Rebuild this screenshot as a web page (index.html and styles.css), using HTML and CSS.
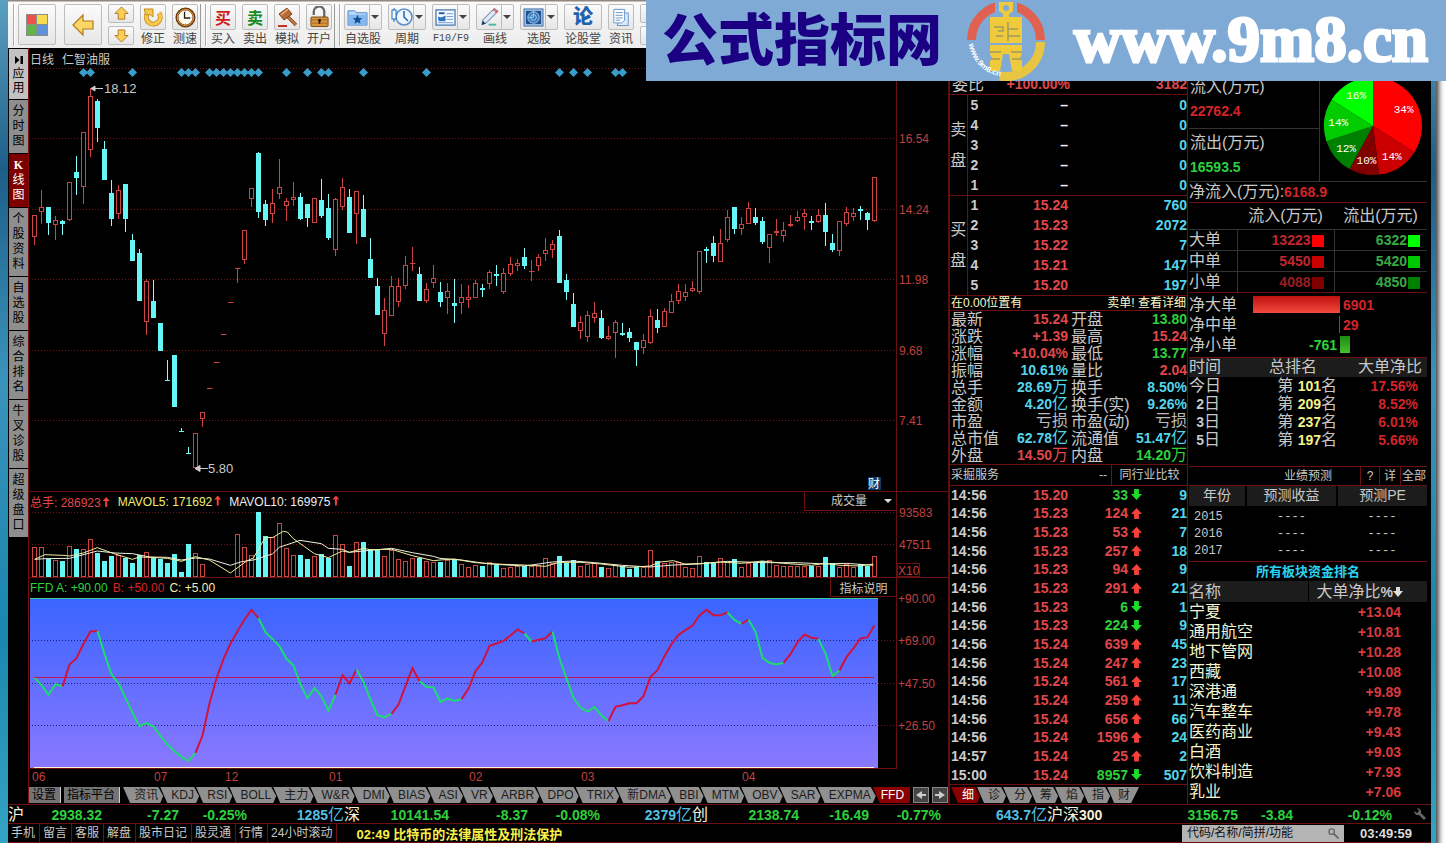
FILE: index.html
```html
<!DOCTYPE html>
<html lang="zh-CN">
<head>
<meta charset="utf-8">
<title>仁智油服 日线</title>
<link rel="stylesheet" href="styles.css">
</head>
<body>
<div class="window">
<header class="toolbar">
  <i class="grip"></i>
  <button class="tool big" aria-label="首页"><svg viewBox="0 0 22 22" width="22" height="22"><rect width="22" height="22" fill="#8a8f86"/><rect x="1" y="1" width="9" height="9" fill="#f0504a"/><rect x="11" y="1" width="10" height="9" fill="#f6dc50"/><rect x="1" y="11" width="9" height="10" fill="#5fb548"/><rect x="11" y="11" width="10" height="10" fill="#5f93d6"/></svg></button>
  <button class="tool big" aria-label="后退"><svg viewBox="0 0 24 24" width="24" height="24"><path d="M2 12 12 2v6h10v8H12v6z" fill="#fbd766" stroke="#b3791c" stroke-width="1.2"/></svg></button>
  <div class="stack">
    <button class="tool" aria-label="向上"><svg viewBox="0 0 16 16" width="15" height="15"><path d="M8 1 15 8h-3.500v6h-7V8H1z" fill="#fbcf55" stroke="#b3791c"/></svg></button>
    <button class="tool" aria-label="向下"><svg viewBox="0 0 16 16" width="15" height="15"><path d="M8 15 1 8h3.500V2h7v6H15z" fill="#fbcf55" stroke="#b3791c"/></svg></button>
  </div>
  <div class="item"><button class="tool" id="t1"><svg viewBox="0 0 22 22" width="22" height="22"><path d="M5 8a7 7 0 1 0 12-1" fill="none" stroke="#c68a1e" stroke-width="5"/><path d="M5 8a7 7 0 1 0 12-1" fill="none" stroke="#f9c94c" stroke-width="3.400"/><path d="M2 3h9v8L8 8.500 4 9z" fill="#f9c94c" stroke="#c68a1e"/></svg></button><label for="t1">修正</label></div>
  <div class="item"><button class="tool" id="t2"><svg viewBox="0 0 22 22" width="21" height="21"><circle cx="11" cy="11" r="9" fill="#fffdf0" stroke="#6d3a12" stroke-width="3"/><circle cx="11" cy="11" r="8.500" fill="none" stroke="#e7a537"/><path d="M10 5v6.500h6" fill="none" stroke="#222" stroke-width="1.400"/><path d="M11 3.500v1M11 17.500v1M3.500 11h1M17.500 11h1" stroke="#777"/></svg></button><label for="t2">测速</label></div>
  <i class="split"></i><i class="grip"></i>
  <div class="item"><button class="tool glyph buy" id="t3">买</button><label for="t3">买入</label></div>
  <div class="item"><button class="tool glyph sell" id="t4">卖</button><label for="t4">卖出</label></div>
  <div class="item"><button class="tool" id="t5"><svg viewBox="0 0 22 22" width="22" height="22"><path d="M10 9 20 19" stroke="#8d4a22" stroke-width="3.200"/><path d="M10 9 20 19" stroke="#c9824c" stroke-width="1.400"/><path d="m3 8 8-6 5 6-8 6z" fill="#b86a38" stroke="#7d421d"/><path d="m5 9 7-6" stroke="#edb284" stroke-width="1.500"/><path d="M2 20h9" stroke="#c63222" stroke-width="2"/></svg></button><label for="t5">模拟</label></div>
  <div class="item"><button class="tool" id="t6"><svg viewBox="0 0 22 22" width="21" height="22"><path d="M5 9V6a5 5 0 0 1 11-1v6" fill="none" stroke="#666" stroke-width="2.400"/><rect x="2" y="11" width="18" height="10" rx="1" fill="#d9943f" stroke="#7b4b12"/><path d="M2.500 14h17M2.500 17.500h17" stroke="#a96a22"/><path d="M11 13v5M9.500 14.500h3" stroke="#2c1a05" stroke-width="1.800"/></svg></button><label for="t6">开户</label></div>
  <i class="split"></i><i class="grip"></i>
  <div class="item"><button class="tool drop" id="t7"><svg viewBox="0 0 22 20" width="21" height="19"><path d="M1 3h7l2 2h11v13H1z" fill="#b9daf8" stroke="#4b86c4"/><rect x="2" y="7" width="18" height="11" fill="#82b9ef"/><path d="m11 7 1.500 3.500 3.500.3-2.700 2.300 1 3.600-3.300-2-3.300 2 1-3.600L6 10.800l3.500-.3z" fill="#164e96"/></svg></button><label for="t7">自选股</label></div>
  <div class="item"><button class="tool drop" id="t8"><svg viewBox="0 0 22 20" width="22" height="20"><circle cx="13" cy="10" r="8" fill="#eef6ff" stroke="#5c8fc4" stroke-width="1.600"/><path d="M13 4v6l4 4" fill="none" stroke="#2566a8" stroke-width="1.500"/><path d="M3 1v14" stroke="#1a6fc1"/><rect x="1" y="3" width="4" height="9" fill="#fff" stroke="#1a6fc1"/></svg></button><label for="t8">周期</label></div>
  <div class="item"><button class="tool drop" id="t9"><svg viewBox="0 0 22 20" width="21" height="19"><rect x="1" y="2" width="20" height="16" fill="#f6faff" stroke="#4d7fb5" stroke-width="1.400"/><path d="M12 6h7M12 9h7M3 12h2M12 12h7M3 15.500h16" stroke="#6e9bd0"/><rect x="4" y="4.500" width="6" height="2" fill="#1e58a4"/><path d="M3 9l3 1 3-1 2-1v6H4z" fill="#2e73c2"/></svg></button><label for="t9" class="mono">F10/F9</label></div>
  <div class="item"><button class="tool drop" id="t10"><svg viewBox="0 0 22 20" width="21" height="20"><path d="M10 18h8" stroke="#48b8a4" stroke-width="2"/><path d="M3 18 4 13 16 1l4 3L8 16z" fill="#cfe1f3" stroke="#567796"/><path d="m15 2 4 3" stroke="#e65555" stroke-width="2.500"/><path d="m6 14 11-11" stroke="#fff"/><path d="m3 18 1-4 3 3z" fill="#17395e"/></svg></button><label for="t10">画线</label></div>
  <div class="item"><button class="tool drop" id="t11"><svg viewBox="0 0 22 20" width="21" height="19"><rect x="1" y="1" width="20" height="18" fill="#a9c7e8" stroke="#3c6ba5"/><rect x="3" y="3" width="16" height="14" fill="#1e4f8e"/><circle cx="11" cy="10" r="6" fill="#3b78bd" stroke="#a9d2f4"/><circle cx="11" cy="10" r="3" fill="none" stroke="#a9d2f4"/><path d="M11 10V3M11 10H5" stroke="#7bd0ee"/></svg></button><label for="t11">选股</label></div>
  <div class="item"><button class="tool wide forum" id="t12">论</button><label for="t12">论股堂</label></div>
  <div class="item"><button class="tool" id="t13"><svg viewBox="0 0 20 20" width="18" height="19"><rect x="6" y="5" width="12" height="14" fill="#dcebfa" stroke="#5d8fc6"/><path d="M2 1h12v12l-3 3H2z" fill="#fff" stroke="#5d8fc6"/><path d="M4 4.500h8M4 7.500h8M4 10.500h8M4 13h5" stroke="#5d8fc6"/></svg></button><label for="t13">资讯</label></div>
  <div class="stack"><button class="tool" aria-label="更多"></button><button class="tool" aria-label="更多选项"></button></div>
</header>

<main class="main">
<nav class="side">
  <button class="light"><svg viewBox="0 0 8 8" width="8" height="8"><path d="M0 0l4.500 4L0 8zM5.500 0H8v8H5.500z" fill="#000"/></svg>应用</button>
  <button>分时图</button>
  <button class="on"><b>K</b>线图</button>
  <button>个股资料</button>
  <button>自选股</button>
  <button>综合排名</button>
  <button>牛叉诊股</button>
  <button>超级盘口</button>
</nav>

<section class="charts">
  <div class="strip"><div class="strip-in"><span>日线</span><span>仁智油服</span></div></div>
  <svg class="plot" id="price" viewBox="29 68 919 423"></svg>
  <div class="strip topline">
    <div class="strip-in">
      <span class="red">总手: 286923<s class="up"></s></span><span class="yellow">MAVOL5: 171692<s class="up"></s></span><span class="white">MAVOL10: 169975<s class="up"></s></span>
      <select class="pick" aria-label="副图指标"><option>成交量</option></select>
    </div>
  </div>
  <svg class="plot" id="volume" viewBox="29 511 919 66"></svg>
  <div class="strip topline">
    <div class="strip-in ffd"><span class="green">FFD A: +90.00</span><span class="dred">B: +50.00</span><span class="cream">C: +5.00</span><button class="explain">指标说明</button></div>
  </div>
  <svg class="plot" id="ffd" viewBox="29 597 919 188"></svg>
  <div class="tabs">
    <button class="sq">设置</button><button class="sq">指标平台</button>
    <div class="slants">
    <button>资讯</button><button>KDJ</button><button>RSI</button><button>BOLL</button><button>主力</button><button>W&amp;R</button><button>DMI</button><button>BIAS</button><button>ASI</button><button>VR</button><button>ARBR</button><button>DPO</button><button>TRIX</button><button>新DMA</button><button>BBI</button><button>MTM</button><button>OBV</button><button>SAR</button><button>EXPMA</button><button class="on end">FFD</button>
    </div>
    <button class="arrow" aria-label="左移"><svg viewBox="0 0 10 8" width="10" height="8"><path d="M0 4 6 0v3h4v2H6v3z" fill="#ccc"/></svg></button><button class="arrow" aria-label="右移"><svg viewBox="0 0 10 8" width="10" height="8"><path d="M10 4 4 0v3H0v2h4v3z" fill="#ccc"/></svg></button>
  </div>
</section>

<section class="quote">
  <div class="ratio"><span>委比</span><b class="red">+100.00%</b><b class="red">3182</b></div>
  <table class="book">
    <colgroup><col class="c-side"><col class="c-lvl"><col class="c-price"><col></colgroup>
    <tbody>
    <tr><th rowspan="5">卖<br>盘</th><td class="lvl">5</td><td class="white">–</td><td class="cyan">0</td></tr>
    <tr><td class="lvl">4</td><td class="white">–</td><td class="cyan">0</td></tr>
    <tr><td class="lvl">3</td><td class="white">–</td><td class="cyan">0</td></tr>
    <tr><td class="lvl">2</td><td class="white">–</td><td class="cyan">0</td></tr>
    <tr><td class="lvl">1</td><td class="white">–</td><td class="cyan">0</td></tr>
    </tbody><tbody>
    <tr><th rowspan="5">买<br>盘</th><td class="lvl">1</td><td>15.24</td><td class="cyan">760</td></tr>
    <tr><td class="lvl">2</td><td>15.23</td><td class="cyan">2072</td></tr>
    <tr><td class="lvl">3</td><td>15.22</td><td class="cyan">7</td></tr>
    <tr><td class="lvl">4</td><td>15.21</td><td class="cyan">147</td></tr>
    <tr><td class="lvl">5</td><td>15.20</td><td class="cyan">197</td></tr>
    </tbody>
  </table>
  <div class="notice"><span>在0.00位置有</span><a href="#">卖单! 查看详细</a></div>
  <table class="detail">
    <colgroup><col class="d1"><col class="d2"><col class="d3"><col></colgroup>
    <tr><th>最新</th><td>15.24</td><th>开盘</th><td class="green">13.80</td></tr>
    <tr><th>涨跌</th><td>+1.39</td><th>最高</th><td>15.24</td></tr>
    <tr><th>涨幅</th><td>+10.04%</td><th>最低</th><td class="green">13.77</td></tr>
    <tr><th>振幅</th><td class="cyan">10.61%</td><th>量比</th><td>2.04</td></tr>
    <tr><th>总手</th><td class="cyan">28.69<i>万</i></td><th>换手</th><td class="cyan">8.50%</td></tr>
    <tr><th>金额</th><td class="cyan">4.20<i>亿</i></td><th>换手(实)</th><td class="cyan">9.26%</td></tr>
    <tr><th>市盈</th><td class="grey"><i>亏损</i></td><th>市盈(动)</th><td class="grey"><i>亏损</i></td></tr>
    <tr><th>总市值</th><td class="cyan">62.78<i>亿</i></td><th>流通值</th><td class="cyan">51.47<i>亿</i></td></tr>
    <tr><th>外盘</th><td>14.50<i>万</i></td><th>内盘</th><td class="green">14.20<i>万</i></td></tr>
  </table>
  <div class="sector"><span>采掘服务</span><span>--</span><a href="#">同行业比较</a></div>
  <div class="ticks"><table>
    <colgroup><col class="k1"><col class="k2"><col class="k3"><col class="k4"><col></colgroup>
    <tr><th>14:56</th><td>15.20</td><td class="green">33</td><td class="dn"></td><td class="cyan">9</td></tr>
    <tr><th>14:56</th><td>15.23</td><td>124</td><td class="ar"></td><td class="cyan">21</td></tr>
    <tr><th>14:56</th><td>15.23</td><td>53</td><td class="ar"></td><td class="cyan">7</td></tr>
    <tr><th>14:56</th><td>15.23</td><td>257</td><td class="ar"></td><td class="cyan">18</td></tr>
    <tr><th>14:56</th><td>15.23</td><td>94</td><td class="ar"></td><td class="cyan">9</td></tr>
    <tr><th>14:56</th><td>15.23</td><td>291</td><td class="ar"></td><td class="cyan">21</td></tr>
    <tr><th>14:56</th><td>15.23</td><td class="green">6</td><td class="dn"></td><td class="cyan">1</td></tr>
    <tr><th>14:56</th><td>15.23</td><td class="green">224</td><td class="dn"></td><td class="cyan">9</td></tr>
    <tr><th>14:56</th><td>15.24</td><td>639</td><td class="ar"></td><td class="cyan">45</td></tr>
    <tr><th>14:56</th><td>15.24</td><td>247</td><td class="ar"></td><td class="cyan">23</td></tr>
    <tr><th>14:56</th><td>15.24</td><td>561</td><td class="ar"></td><td class="cyan">17</td></tr>
    <tr><th>14:56</th><td>15.24</td><td>259</td><td class="ar"></td><td class="cyan">11</td></tr>
    <tr><th>14:56</th><td>15.24</td><td>656</td><td class="ar"></td><td class="cyan">66</td></tr>
    <tr><th>14:56</th><td>15.24</td><td>1596</td><td class="ar"></td><td class="cyan">24</td></tr>
    <tr><th>14:57</th><td>15.24</td><td>25</td><td class="ar"></td><td class="cyan">2</td></tr>
    <tr><th>15:00</th><td>15.24</td><td class="green">8957</td><td class="dn"></td><td class="cyan">507</td></tr>
  </table></div>
  <div class="tabs quote-tabs"><div class="slants"><button class="on">细</button><button>诊</button><button>分</button><button>筹</button><button>焰</button><button>指</button><button class="last">财</button></div></div>
</section>

<section class="flow">
  <div class="inout">
    <div class="io">
      <div class="io-box"><span>流入(万元)</span><b class="dred">22762.4</b></div>
      <div class="io-box"><span>流出(万元)</span><b class="green">16593.5</b></div>
    </div>
    <svg id="pie" viewBox="0 0 107 106" width="107" height="106"></svg>
  </div>
  <div class="net">净流入(万元):<b class="dred">6168.9</b></div>
  <table class="sizes">
    <colgroup><col class="s1"><col class="s2"><col></colgroup>
    <tr><th></th><th class="h">流入(万元)</th><th class="h">流出(万元)</th></tr>
    <tr><th>大单</th><td>13223<s class="b1"></s></td><td class="green">6322<s class="b4"></s></td></tr>
    <tr><th>中单</th><td>5450<s class="b2"></s></td><td class="green">5420<s class="b5"></s></td></tr>
    <tr><th>小单</th><td class="dim">4088<s class="b3"></s></td><td class="green">4850<s class="b6"></s></td></tr>
  </table>
  <div class="bars">
    <div><span>净大单</span><p><s class="big-in"></s></p><b class="dred">6901</b></div>
    <div><span>净中单</span><p><s class="mid-in"></s></p><b class="dred">29</b></div>
    <div><span>净小单</span><p class="green">-761</p><s class="small-out"></s></div>
  </div>
  <table class="rank">
    <colgroup><col class="r1"><col class="r2"><col></colgroup>
    <tr class="head"><th>时间</th><td>总排名</td><td>大单净比</td></tr>
    <tr><th>今日</th><td>第 <b>101</b>名</td><td class="v">17.56%</td></tr>
    <tr><th><b>2</b>日</th><td>第 <b>209</b>名</td><td class="v">8.52%</td></tr>
    <tr><th><b>3</b>日</th><td>第 <b>237</b>名</td><td class="v">6.01%</td></tr>
    <tr><th><b>5</b>日</th><td>第 <b>197</b>名</td><td class="v">5.66%</td></tr>
  </table>
  <div class="fc-title"><span>业绩预测</span><button>?</button><button>详</button><button>全部</button></div>
  <table class="forecast">
    <colgroup><col class="f1"><col class="f2"><col></colgroup>
    <tr class="head"><th>年份</th><th>预测收益</th><th>预测PE</th></tr>
    <tr><th>2015</th><td>----</td><td>----</td></tr>
    <tr><th>2016</th><td>----</td><td>----</td></tr>
    <tr><th>2017</th><td>----</td><td>----</td></tr>
  </table>
  <h2>所有板块资金排名</h2>
  <table class="sectors">
    <tr class="head"><th>名称</th><td>大单净比<b>%</b><svg viewBox="0 0 10 10" width="10" height="10"><path d="M3 0h4v4h3L5 10 0 4h3z" fill="#ddd"/></svg></td></tr>
    <tr><th>宁夏</th><td>+13.04</td></tr>
    <tr><th>通用航空</th><td>+10.81</td></tr>
    <tr><th>地下管网</th><td>+10.28</td></tr>
    <tr><th>西藏</th><td>+10.08</td></tr>
    <tr><th>深港通</th><td>+9.89</td></tr>
    <tr><th>汽车整车</th><td>+9.78</td></tr>
    <tr><th>医药商业</th><td>+9.43</td></tr>
    <tr><th>白酒</th><td>+9.03</td></tr>
    <tr><th>饮料制造</th><td>+7.93</td></tr>
    <tr><th>乳业</th><td>+7.06</td></tr>
  </table>
</section>
</main>

<div class="indices">
  <div class="idx i1"><span>沪</span><b>2938.32</b><b>-7.27</b><b>-0.25%</b><b class="cyan">1285<i>亿</i></b></div>
  <div class="idx i2"><span>深</span><b>10141.54</b><b>-8.37</b><b>-0.08%</b><b class="cyan">2379<i>亿</i></b></div>
  <div class="idx i3"><span>创</span><b>2138.74</b><b>-16.49</b><b>-0.77%</b><b class="cyan">643.7<i>亿</i></b></div>
  <div class="idx i4"><span>沪深<em>300</em></span><b>3156.75</b><b>-3.84</b><b>-0.12%</b><svg viewBox="0 0 14 14" width="14" height="14"><path d="M1 4a4 4 0 0 0 5 4l5 5 2-2-5-5a4 4 0 0 0-4-5l2 3-2 2z" fill="#666"/></svg></div>
</div>
<footer class="status">
  <nav><a href="#">手机</a><a href="#">留言</a><a href="#">客服</a><a href="#">解盘</a><a href="#">股市日记</a><a href="#">股灵通</a><a href="#">行情</a><a href="#">24小时滚动</a></nav>
  <a class="news" href="#">02:49 比特币的法律属性及刑法保护</a>
  <div class="search"><input type="text" aria-label="搜索" placeholder="代码/名称/简拼/功能"><svg viewBox="0 0 12 12" width="11" height="11"><circle cx="4" cy="4" r="3" fill="none" stroke="#666" stroke-width="1.400"/><path d="m6.500 6.500 5 5" stroke="#666" stroke-width="2"/></svg></div>
  <time>03:49:59</time>
</footer>
</div>

<aside class="banner">
  <span class="brand">公式指标网</span>
  <svg class="logo" viewBox="0 0 80 80" width="80" height="80">
    <defs><path id="arc" d="M3 43A37 37 0 0 0 33 75"/></defs>
    <path d="M5.500 39a34.500 34.500 0 0 1 69 0" fill="none" stroke="#e0614f" stroke-width="9"/>
    <path d="M74.500 41A34.500 34.500 0 0 1 34 75" fill="none" stroke="#e8c443" stroke-width="9"/>
    <path d="M29 0h22v16h-7v42h-8V16h-7z" fill="#7faad6"/>
    <path d="M33 1h14v9l-4 3v3h13v26H24V16h13v-3l-4-3z" fill="#efcb3c"/>
    <circle cx="40" cy="7" r="3" fill="#7faad6"/>
    <path d="M28 26h9v4h-5M42 21v19M42 28h10M30 35h7M42 35h12" fill="none" stroke="#a39a5c" stroke-width="1.500"/>
    <path d="M24 44h32v9l-2 4 2 3v10H46l-3-17h-6l-3 17H24V60l2-3-2-4z" fill="#efcb3c"/>
    <path d="M24 51h11M45 51h11M25 58h9M46 58h9" stroke="#a39a5c" stroke-width="1.500"/>
    <text class="ring"><textPath href="#arc">www.9m8.cn</textPath></text>
  </svg>
  <span class="site">www.9m8.cn</span>
</aside>
<script src="script.js"></script>
</body>
</html>
```

FILE: styles.css
```css
* { box-sizing: border-box; }
body {
  margin: 0;
  background: #fff;
  color: #c8c8c8;
  font-family: "Liberation Sans", "Noto Sans CJK SC", sans-serif;
  font-size: 12px;
}
button, input, select {
  font: inherit;
  color: inherit;
  margin: 0;
  padding: 0;
  border: 0;
  background: none;
  border-radius: 0;
}
a { color: inherit; text-decoration: none; }
i, em { font-style: normal; }
s { text-decoration: none; display: inline-block; }
table { border-collapse: collapse; border-spacing: 0; width: 100%; table-layout: fixed; }
th, td { padding: 0; font-weight: 400; }

.red { color: #e0474b; }
.dred { color: #d3242a; }
.green { color: #2fd03c; }
.cyan { color: #55d5ea; }
.yellow { color: #f0ee70; }
.cream { color: #f5efb0; }
.white { color: #eee; }
.grey { color: #bbb; }

.window {
  margin-right: 10px;
  padding: 0 5px 0 8px;
  background: linear-gradient(#5aa0c0, #1d5e88 20%, #3a93bb 45%, #1a86ae 75%, #35a3c4);
  box-shadow: 3px 4px 5px #444;
}

/* toolbar */
.toolbar {
  display: flex;
  gap: 6px;
  height: 48px;
  padding: 4px 6px 0 5px;
  overflow: hidden;
  background: linear-gradient(#8f8680 1px, #fafafa 2px, #ececec);
  color: #444;
}
.grip { flex: none; width: 2px; margin-right: -3px; height: 42px; border-left: 1px solid #aaa; background: #fff; }
.split { flex: none; width: 1px; margin: 0 -2px 0 -4px; height: 44px; background: #999; }
.tool {
  display: flex;
  align-items: center;
  justify-content: center;
  width: 26px;
  height: 26px;
  background: linear-gradient(#fbfbfb, #e6e6e6);
  border: 1px solid #bdbdbd;
  border-radius: 2px;
}
.big { flex: none; width: 38px; height: 41px; }
.big + .big { margin-left: 2px; }
.stack { flex: none; display: grid; gap: 3px; align-content: start; }
.stack .tool { height: 19px; }
.item { flex: none; display: flex; flex-direction: column; align-items: center; }
.item label { width: 26px; display: flex; justify-content: center; white-space: nowrap; line-height: 18px; }
.drop, .wide { width: 38px; }
.drop { justify-content: flex-start; padding-left: 2px; position: relative; }
.drop::before { content: ""; position: absolute; right: 11px; top: 0; bottom: 0; width: 1px; background: #bdbdbd; }
.drop::after {
  content: "";
  position: absolute;
  right: 2px;
  top: 10px;
  border: 4px solid transparent;
  border-top-color: #444;
  border-bottom: 0;
}
.glyph { font-weight: 700; font-size: 16px; }
.buy { color: #d01c1c; }
.sell { color: #158a1f; }
.forum { color: #1f5fae; font-weight: 900; font-size: 20px; line-height: 20px; }
.mono { font-family: "Liberation Mono", monospace; font-size: 10px; }

/* main columns */
.main {
  display: grid;
  grid-template-columns: 21px minmax(0, 920fr) minmax(0, 239fr) minmax(0, 243fr);
  background: #000;
}
.side { display: flex; flex-direction: column; border-right: 1px solid #7a0c0c; padding-top: 1px; }
.side button {
  width: 19px;
  margin-left: 1px;
  padding: 4px 3px;
  border-bottom: 1px solid #000;
  background: #8e8e8e;
  color: #000;
  line-height: 15px;
  word-break: break-all;
}
.side .light { background: #c2c2c2; line-height: 14px; }
.side .light svg { display: block; margin: 3px auto; }
.side .on { background: #7c0000; color: #fff; }
.side b { display: block; font-family: "Liberation Serif", serif; }

/* charts */
.charts { display: flex; flex-direction: column; border-right: 1px solid #5a0c0c; }
.strip { display: grid; grid-template-columns: 868fr 51fr; height: 20px; }
.topline { border-top: 1px solid #6b1010; }
.strip-in {
  position: relative;
  display: flex;
  align-items: center;
  gap: 8px;
  border-right: 1px solid #6b1010;
  padding-left: 1px;
  white-space: nowrap;
}
.ffd { gap: 5px; }
.up {
  width: 7px;
  height: 10px;
  margin-left: 2px;
  background: #f0403a;
  clip-path: polygon(50% 0, 100% 40%, 64% 40%, 64% 100%, 36% 100%, 36% 40%, 0 40%);
}
.pick {
  appearance: none;
  margin-left: auto;
  align-self: stretch;
  width: 92px;
  padding-left: 26px;
  border: solid #6b1010;
  border-width: 0 0 1px 1px;
  background: #000;
}
.strip-in:has(.pick)::after {
  content: "";
  position: absolute;
  right: 4px;
  top: 7px;
  border: 4px solid transparent;
  border-top-color: #ddd;
  border-bottom: 0;
}
.explain { margin-left: auto; align-self: stretch; width: 66px; border: solid #6b1010; border-width: 0 0 1px 1px; }
.plot { display: block; width: 100%; height: auto; overflow: visible; font-size: 12px; }

.tabs { display: flex; height: 19px; padding: 2px 0 1px; white-space: nowrap; }
.tabs button { flex: none; color: #1c1c1c; background: #909090; line-height: 16px; }
.tabs .sq { padding: 0 4px 0 3px; margin-right: 3px; border-right: 1px solid #ccc; background: #747474; color: #000; }
.slants { display: flex; flex: 1; }
.slants button {
  flex: 1 1 auto;
  padding: 0 7px 0 10px;
  margin-left: -6px;
  clip-path: polygon(0 0, calc(100% - 8px) 0, calc(100% - 3px) 9px, calc(100% - 6px) 100%, 7px 100%);
}
.slants button:first-child { margin-left: 0; }
.slants .on { background: #8a0000; color: #fff; }
.slants .end { flex: none; padding: 0 6px 0 8px; clip-path: polygon(0 0, 100% 0, 100% 100%, 7px 100%); }
.tabs .arrow { width: 16px; margin-left: 3px; border: 1px solid #888; background: #444; display: flex; align-items: center; justify-content: center; }

/* quote column */
.quote { display: flex; flex-direction: column; border-right: 1px solid #6b1010; padding-top: 27px; border-left: 1px solid #6b1010; font-size: 16px; }
.ratio { display: grid; grid-template-columns: 50px 68px 1fr; line-height: 19px; height: 20px; border-bottom: 1px solid #6b1010; padding-left: 2px; }
.ratio b { text-align: right; font-size: 14px; }
.c-side { width: 17px; } .c-lvl { width: 22px; } .c-price { width: 79px; }
.book tbody { border-bottom: 1px solid #6b1010; }
.book tr { height: 20px; }
.book th { line-height: 31px; border-right: 1px solid #6b1010; }
.book td { text-align: right; font-size: 14px; font-weight: 700; line-height: 18px; color: #e0474b; }
.book td.cyan, .detail td.cyan, .ticks td.cyan { color: #55d5ea; }
.book td.white { color: #eee; }
.book td.lvl { text-align: left; padding-left: 3px; color: #ccc; }
.notice { display: flex; justify-content: space-between; line-height: 14px; font-size: 12px; color: #fafac8; border-bottom: 1px solid #6b1010; padding: 0 1px; }
.detail tr { height: 17px; }
.detail th { text-align: left; line-height: 17px; padding-left: 1px; white-space: nowrap; }
.detail td { text-align: right; font-size: 14px; font-weight: 700; line-height: 17px; color: #e0474b; white-space: nowrap; }
.detail td.green, .ticks td.green { color: #2fd03c; }
.detail td.grey { color: #bbb; }
.detail i, .idx i { font-weight: 400; font-size: 16px; line-height: 0; }
.d1 { width: 50px; } .d2 { width: 68px; } .d3 { width: 60px; }
.detail th:nth-child(3) { padding-left: 3px; }
.sector { display: grid; grid-template-columns: 1fr auto 80px; line-height: 20px; font-size: 12px; border: solid #6b1010; border-width: 1px 0; padding-left: 1px; }
.sector a { margin-left: 4px; text-align: center; border-left: 1px solid #6b1010; }
.ticks { flex: 1; min-height: 0; border-bottom: 1px solid #6b1010; }
.ticks table { height: 100%; }
.ticks th, .ticks td { font-size: 14px; font-weight: 700; line-height: 18px; text-align: right; }
.ticks th { text-align: left; color: #ccc; padding-left: 1px; }
.ticks td { color: #e0474b; }
.k1 { width: 50px; } .k2 { width: 68px; } .k3 { width: 60px; } .k4 { width: 15px; }
.ar::before, .dn::before { content: ""; display: block; width: 11px; height: 11px; margin-left: 3px; background: #f6403a; clip-path: polygon(50% 0, 100% 55%, 72% 55%, 72% 100%, 28% 100%, 28% 55%, 0 55%); }
.dn::before { background: #1cdc2a; transform: rotate(180deg); }
.quote-tabs { font-size: 12px; }
.quote-tabs .slants { flex: none; padding-left: 1px; }
.quote-tabs .slants button { padding: 0 9px 0 11px; }
.quote-tabs .slants .last { clip-path: polygon(0 0, 100% 0, calc(100% - 8px) 100%, 7px 100%); }

/* fund flow column */
.flow { padding: 27px 4px 0 1px; font-size: 16px; }
.inout { display: grid; grid-template-columns: 1fr 107px; height: 107px; border-bottom: 1px solid #333; }
.io { display: grid; grid-template-rows: 1fr 1fr; border-right: 1px solid #333; }
.io-box { display: grid; align-content: start; padding-left: 1px; line-height: 24px; }
.io-box + .io-box { border-top: 1px solid #333; padding-top: 2px; }
.flow b { font-size: 14px; }
.net { line-height: 20px; border-bottom: 1px solid #6b1010; white-space: nowrap; }
.sizes { border-bottom: 1px solid #6b1010; }
.sizes tr { height: 21px; }
.sizes tr:first-child { height: 26px; }
.s1 { width: 48px; } .s2 { width: 97px; }
.sizes th { text-align: left; line-height: 20px; }
.sizes th.h { text-align: center; white-space: nowrap; border: 0; }
.sizes td, .sizes tr + tr th { border-top: 1px solid #333; }
.sizes td { border-left: 1px solid #333; }
.sizes td { text-align: right; font-size: 14px; font-weight: 700; line-height: 20px; color: #c0272c; padding-right: 10px; }
.sizes td + td { padding-right: 7px; }
.sizes td.green { color: #3aa843; }
.sizes td.dim { color: #9a1c20; }
.sizes td s { width: 12px; height: 12px; margin-left: 1px; vertical-align: -2px; }
.b1 { background: #ff0000; } .b2 { background: #c80000; } .b3 { background: #800000; }
.b4 { background: #00ff00; } .b5 { background: #00c800; } .b6 { background: #008000; }
.bars { padding: 2px 0; border-bottom: 1px solid #6b1010; }
.bars div { display: grid; grid-template-columns: 50px 101px 1fr; align-items: center; height: 20px; line-height: 20px; white-space: nowrap; }
.bars p { margin: 0; display: flex; justify-content: flex-end; font-size: 14px; font-weight: 700; }
.bars p.green { padding-right: 3px; }
.bars b { padding-left: 3px; }
.big-in { width: 87px; height: 17px; background: linear-gradient(#c01010, #f04a3c); }
.mid-in { width: 1px; height: 17px; background: #a33; }
.small-out { width: 10px; height: 17px; background: linear-gradient(#1d8a10, #46c030); }
.head { background: #1c1c1c; }
.rank { margin-bottom: 17px; }
.rank tr { height: 18px; }
.rank tr.head { height: 19px; }
.r1 { width: 57px; } .r2 { width: 91px; }
.rank th, .rank td { line-height: 18px; text-align: right; white-space: nowrap; }
.rank th { padding-right: 26px; }
.rank .head th { text-align: left; padding: 0; }
.rank .head td:nth-child(2) { padding-right: 20px; }
.rank .head td:nth-child(3) { padding-right: 5px; }
.rank td:nth-child(2) b { color: #f5f08a; }
.rank td.v { color: #d3242a; font-size: 14px; font-weight: 700; padding-right: 9px; }
.fc-title { display: grid; grid-template-columns: 1fr 19px 21px 27px; border: 1px solid #6b1010; border-width: 1px 0; font-size: 12px; line-height: 18px; }
.fc-title span { padding-left: 95px; }
.fc-title button { border-left: 1px solid #6b1010; line-height: 18px; }
.f1 { width: 57px; } .f2 { width: 91px; }
.forecast { font-size: 14px; border-bottom: 1px solid #6b1010; }
.forecast tr { height: 17px; }
.forecast tr.head { height: 20px; }
.forecast tr:nth-child(2) { height: 20px; vertical-align: bottom; }
.forecast tr:last-child { height: 19px; vertical-align: top; }
.forecast th, .forecast td { line-height: 17px; text-align: center; }
.forecast .head th + th { border-left: 2px solid #000; }
.forecast tr + tr th { font-family: "Liberation Mono", monospace; font-size: 12px; text-align: left; padding-left: 5px; }
.forecast td { font-family: "Liberation Mono", monospace; font-size: 12px; }
.flow h2 { margin: 0; text-align: center; font-size: 13px; line-height: 19px; color: #2ad2f0; }
.sectors tr { height: 20px; }
.sectors tr.head { height: 21px; }
.sectors th { text-align: left; line-height: 20px; color: #f4f4d0; }
.sectors td { text-align: right; font-size: 14px; font-weight: 700; line-height: 20px; color: #d93a3e; padding-right: 26px; }
.sectors .head th, .sectors .head td { color: #c8c8c8; font-size: 16px; font-weight: 400; line-height: 20px; white-space: nowrap; }
.sectors .head td { padding-right: 24px; border-left: 1px solid #000; }

/* bottom rows */
.indices { display: grid; grid-template-columns: 336fr 348fr 355fr 384fr; background: #000; border: solid #6b1010; border-width: 1px 0; height: 20px; line-height: 20px; }
.idx { display: grid; white-space: nowrap; }
.idx span { grid-area: 1 / 1; font-size: 16px; color: #f4f0d8; }
.idx em { font-size: 14px; font-weight: 700; }
.idx b { font-size: 14px; text-align: right; color: #2fd03c; grid-row: 1; }
.idx b:nth-child(2) { grid-column: 1; }
.idx b.cyan { color: #55bfe0; }
.i1 { grid-template-columns: 94fr 77fr 68fr 97fr; }
.i2 { grid-template-columns: 105fr 79fr 72fr 92fr; }
.i3 { grid-template-columns: 107fr 70fr 72fr 106fr; }
.i4 { grid-template-columns: 191fr 55fr 99fr 39fr; }
.i4 svg { justify-self: end; margin: 2px 4px 0 0; grid-row: 1; }
.status { display: flex; align-items: center; height: 19px; background: #000; border-bottom: 1px solid #6b1010; white-space: nowrap; }
.status nav { display: flex; flex: none; }
.status nav a { padding: 0 4px 0 3px; border-right: 1px solid #6b1010; line-height: 18px; }
.news { color: #fbf04a; font-weight: 700; font-size: 13px; margin-left: 19px; }
.search { display: flex; align-items: center; flex: none; width: 162px; height: 17px; margin-left: auto; padding: 0 5px; background: #b4b4b4; }
.search input { flex: 1; min-width: 0; color: #111; height: 17px; outline: 0; }
.search input::placeholder { color: #111; opacity: 1; }
.status time { width: 87px; padding-left: 16px; font-weight: 700; font-size: 13px; color: #ddd; }

/* site banner lies over the window */
.banner { position: absolute; top: 0; right: 0; width: 800px; height: 81px; display: flex; align-items: center; background: #7faad6; padding-left: 16px; white-space: nowrap; }
.brand { color: #1b0083; font-size: 56px; font-weight: 900; line-height: 76px; }
.logo { flex: none; margin-left: 24px; }
.ring { font-size: 8px; font-weight: 700; fill: #fff; }
.site { margin-left: 28px; color: #fff; font-family: "Liberation Serif", serif; font-weight: 700; font-size: 65px; line-height: 70px; padding-bottom: 4px; -webkit-text-stroke: 3px #fff; }

/* drawing classes */
.grid { stroke: #7a1414; stroke-dasharray: 1 2; }
.grid-in { stroke: #1c1c70; stroke-dasharray: 1 2; }
.edge { stroke: #6b1010; }
.axis { fill: #c04040; }
.k-up { fill: #000; stroke: #cc4444; }
.k-dn { fill: #66f6f6; stroke: none; }
.w-up { stroke: #cc4444; }
.w-dn { stroke: #8ff; }
.note { fill: #c8c8c8; font-size: 13px; }
.pie-t { fill: #fff; font-family: "Liberation Mono", monospace; font-size: 11px; text-anchor: middle; }
```

FILE: script.js
```js
const STEP = 7, X0 = 34.5;
const px = i => X0 + STEP * i;

// kind, high, body top, body bottom, low
const candles = `r215,215,237,245 r190,207,212,224 c207,207,223,235 r216,220,225,240 c220,221,224,235 r182,182,220,221 c156,172,178,195 r132,132,187,204 r88,96,150,157 c99,101,128,142
c141,149,180,180 c180,193,219,226 r185,190,214,219 c184,184,219,232 c234,240,261,261 c249,253,301,301 r279,281,322,335 c280,301,318,318 c323,323,351,351 c360,380,381,381
c355,355,407,407 c428,431,432,432 c447,453,454,454 r433,433,468,468 r412,412,419,427 r388,388,388,388 r362,362,362,362 r334,334,334,334 r302,302,302,302 r268,268,268,283
r230,230,260,264 r188,188,199,207 c152,153,212,218 c200,204,220,226 r189,203,214,223 r159,187,194,199 r198,201,206,221 r182,197,200,206 c193,197,219,220 c204,204,218,227
r198,198,223,223 c179,200,216,218 c194,208,238,240 r198,199,250,256 r178,187,207,210 c189,197,233,233 r191,191,214,244 c195,209,237,237 c238,259,278,278 c278,286,315,315
r298,310,334,346 r276,286,316,316 r278,286,302,307 r256,265,286,289 r247,263,263,271 c267,274,301,301 r283,289,301,303 r265,278,283,288 c282,292,302,307 r283,291,298,314
c279,303,306,323 r284,297,303,314 r285,297,300,308 r280,283,298,298 c284,288,290,297 r270,272,284,289 c265,274,276,286 r268,273,292,294 r257,264,274,276
r259,263,266,271 c248,257,266,269 r260,271,271,281 r254,257,266,271 r238,250,254,261 r240,244,250,258 c230,236,283,283 c274,280,292,300 c293,304,327,327 r316,322,331,339
r311,315,337,342 r302,313,318,323 c310,318,338,339 r326,336,339,340 r320,322,333,358 c323,333,335,336 c328,332,338,342 c342,342,350,366 r334,340,348,354 r309,316,343,344
c309,320,328,333 r308,311,327,327 r294,301,313,313 r284,291,301,304 r284,292,297,301 r281,288,291,292 r251,251,292,294 c247,249,251,263 c236,243,256,262 r229,243,262,262
r210,217,240,242 c207,207,229,234 r217,224,229,235 r202,208,224,224 c208,217,223,225 c217,221,242,244 r234,234,248,263 r219,231,233,236 r222,230,236,242 r215,224,226,227
r211,217,221,222 r209,213,217,230 c216,221,223,230 r209,215,222,223 c203,215,232,246 c234,243,250,252 r221,221,251,256 r207,212,224,226 r208,213,217,221 c206,209,211,220
c212,213,220,230 r177,177,221,222`.trim().split(/\s+/).map(s => [s[0], ...s.slice(1).split(',').map(Number)]);

const line = (cls, x1, y1, x2, y2) => `<line class="${cls}" x1="${x1}" y1="${y1}" x2="${x2}" y2="${y2}"/>`;
const text = (cls, x, y, s) => `<text class="${cls}" x="${x}" y="${y}">${s}</text>`;
const poly = (pts, color, w = 1) => `<polyline points="${pts}" fill="none" stroke="${color}" stroke-width="${w}"/>`;

// price plot
let out = '';
for (const y of [68, 138, 209, 279, 350, 420]) out += line('grid', 32, y + .5, 896, y + .5);
out += line('edge', 896.5, 68, 896.5, 491);
[7, 8, 14, 21, 22, 23, 25, 26, 27, 28, 29, 30, 31, 32, 36, 39, 41, 42, 47, 56, 75, 77, 79, 83, 84].forEach(i => {
  out += `<path d="M${px(i)} 68l4.500 4.500-4.500 4.500-4.500-4.500z" fill="#3a9cc8"/>`;
});
candles.forEach(([k, h, t, b, l], i) => {
  const x = px(i);
  if (k === 'r') {
    out += line('w-up', x, h, x, l);
    out += b - t < 2 ? line('w-up', x - 2.5, t + .5, x + 3, t + .5)
      : `<rect class="k-up" x="${x - 2}" y="${t + .5}" width="4" height="${Math.max(b - t - 1, 1)}"/>`;
  } else {
    out += line('w-dn', x, h, x, l) + `<rect class="k-dn" x="${x - 2.5}" y="${t}" width="5" height="${b - t}"/>`;
  }
});
out += `<path d="M91 88.500h12M91 88.500l4-2.500v5zM195 468.500h13M195 468.500l5-3v6z" stroke="#ccc" fill="#ccc"/>`;
out += text('note', 104, 93, '18.12') + text('note', 208, 473, '5.80');
out += `<rect x="868" y="477" width="13" height="13" fill="#0d3a66"/>` + `<text x="868" y="488" fill="#fff">财</text>`;
[[143, '16.54'], [214, '14.24'], [284, '11.98'], [355, '9.68'], [425, '7.41']].forEach(([y, s]) => out += text('axis', 899, y, s));
document.getElementById('price').innerHTML = out;

// volume plot
const tops = [202,202,237,239,243,199,207,208,178,220,243,229,226,234,250,225,217,231,237,250,222,276,192,220,253,288,288,288,288,163,202,226,96,168,171,130,205,226,225,237,229,222,234,166,193,258,187,186,208,210,229,211,238,244,234,234,244,247,247,240,238,253,262,256,258,247,255,264,261,258,258,259,256,235,250,228,249,241,258,252,250,261,264,256,258,268,261,262,211,244,250,247,247,262,265,229,247,249,235,246,238,262,250,250,243,241,256,258,259,258,258,258,259,231,250,261,252,262,253,259,229];
out = line('grid', 32, 512.5, 896, 512.5) + line('grid', 32, 544.5, 896, 544.5) + line('edge', 896.5, 511, 896.5, 577);
tops.forEach((z, i) => {
  const y = Math.round(480 + z / 3), x = px(i);
  out += candles[i][0] === 'r'
    ? `<rect class="k-up" x="${x - 2}" y="${y + .5}" width="4" height="${576 - y}"/>`
    : `<rect class="k-dn" x="${x - 2.5}" y="${y}" width="5" height="${577 - y}"/>`;
});
const left = a => a.map(([x, y]) => [x / 3, 480 + y / 3]);
const right = a => a.map(([x, y]) => [440 + x / 3, 480 + y / 3]);
const ma5 = [...left([[104,238],[135,224],[188,226],[209,228],[250,219],[292,203],[345,222],[397,238],[418,231],[450,232],[502,235],[544,244],[586,230],[628,240],[691,279],[740,243],[760,234],[796,172],[817,173],[850,154],[862,156],[880,176],[943,221],[985,233],[1027,213],[1048,217],[1090,205],[1111,209],[1175,208],[1237,227],[1300,242]]),
  ...right([[0,240],[43,237],[106,248],[190,253],[253,255],[316,259],[358,247],[421,247],[484,252],[568,262],[630,258],[660,246],[700,242],[735,252],[790,250],[841,246],[904,250],[967,243],[1030,250],[1114,256],[1156,250],[1200,256],[1260,258],[1300,252]])];
const ma10 = [...left([[104,238],[135,236],[209,235],[292,213],[345,219],[397,221],[450,231],[502,232],[544,240],[586,234],[628,237],[691,256],[725,245],[760,240],[817,222],[838,202],[900,181],[964,191],[985,205],[1027,208],[1048,217],[1111,211],[1175,205],[1237,218],[1300,229]]),
  ...right([[0,235],[64,240],[148,252],[253,258],[337,246],[400,243],[463,248],[547,256],[630,261],[700,255],[778,252],[862,244],[967,248],[1072,248],[1156,252],[1219,250],[1300,256]])];
out += poly(ma10.join(' '), '#f0f0e0') + poly(ma5.join(' '), '#f0eea0');
out += text('axis', 899, 517, '93583') + text('axis', 899, 549, '47511');
out += `<rect x="897.500" y="563.500" width="22" height="13" fill="none" class="edge"/>` + text('axis', 898, 575, 'X10');
document.getElementById('volume').innerHTML = out;

// FFD plot
const ffd = [596,617,646,614,621,555,536,493,455,455,523,585,611,655,700,740,731,741,770,795,815,832,844,820,768,672,597,539,492,455,420,391,416,458,479,500,538,558,615,656,626,651,693,646,587,612,570,607,660,707,713,703,675,620,566,605,622,624,667,657,664,659,628,575,548,499,492,484,468,450,462,486,481,476,456,537,597,655,684,696,683,708,725,682,677,671,671,650,592,572,530,494,466,452,438,408,391,407,407,399,421,433,420,457,535,550,555,550,524,488,465,475,478,522,589,573,533,506,477,473,437];
const turns = [4, 9, 23, 32, 43, 46, 51, 55, 61, 70, 71, 74, 82, 99, 101, 102, 107, 112, 115, 120];
out = `<defs><linearGradient id="sky" x2="0" y2="1"><stop stop-color="#3a64ff"/><stop offset="1" stop-color="#8a78ff"/></linearGradient></defs>
<rect x="30" y="598" width="848" height="170" fill="url(#sky)"/>`;
for (const y of [640, 683, 725]) out += line('grid-in', 32, y + .5, 878, y + .5) + line('grid', 878, y + .5, 896, y + .5);
out += `<path d="M30 598.500h848" stroke="#3cc8a0"/><path d="M34 677.500h840" stroke="#c01850"/><path d="M34 767.500h840" stroke="#fff0c8"/>`;
let a = 0;
turns.forEach((b, n) => {
  const pts = [];
  for (let i = a; i <= b; i++) pts.push([px(i), 480 + ffd[i] / 3 - .5]);
  out += poly(pts.join(' '), n % 2 ? '#d0123c' : '#1cdc6c', 2);
  a = b;
});
out += line('edge', 896.5, 597, 896.5, 768) + line('edge', 30, 768.5, 897, 768.5);
[[603, '+90.00'], [645, '+69.00'], [688, '+47.50'], [730, '+26.50']].forEach(([y, s]) => out += text('axis', 898, y, s));
[[32, '06'], [154, '07'], [225, '12'], [329, '01'], [469, '02'], [581, '03'], [742, '04']].forEach(([x, s]) => out += text('axis', x, 781, s));
document.getElementById('ffd').innerHTML = out;

// flow pie
const parts = [[34, '#ff0000'], [14, '#cc0000'], [10, '#800000'], [12, '#008000'], [14, '#00cc00'], [16, '#00ff00']];
const cx = 53, cy = 51, r = 49;
let acc = 0, labels = '';
out = '';
parts.forEach(([p, c]) => {
  const at = (v, q) => [cx + q * Math.sin(v * Math.PI / 50), cy - q * Math.cos(v * Math.PI / 50)];
  out += `<path d="M${cx} ${cy}L${at(acc, r)}A${r} ${r} 0 0 1 ${at(acc + p, r)}z" fill="${c}"/>`;
  const m = at(acc + p / 2, 35);
  labels += `<text class="pie-t" x="${m[0]}" y="${m[1] + 4}">${p}%</text>`;
  acc += p;
});
document.getElementById('pie').innerHTML = out + labels;
```
